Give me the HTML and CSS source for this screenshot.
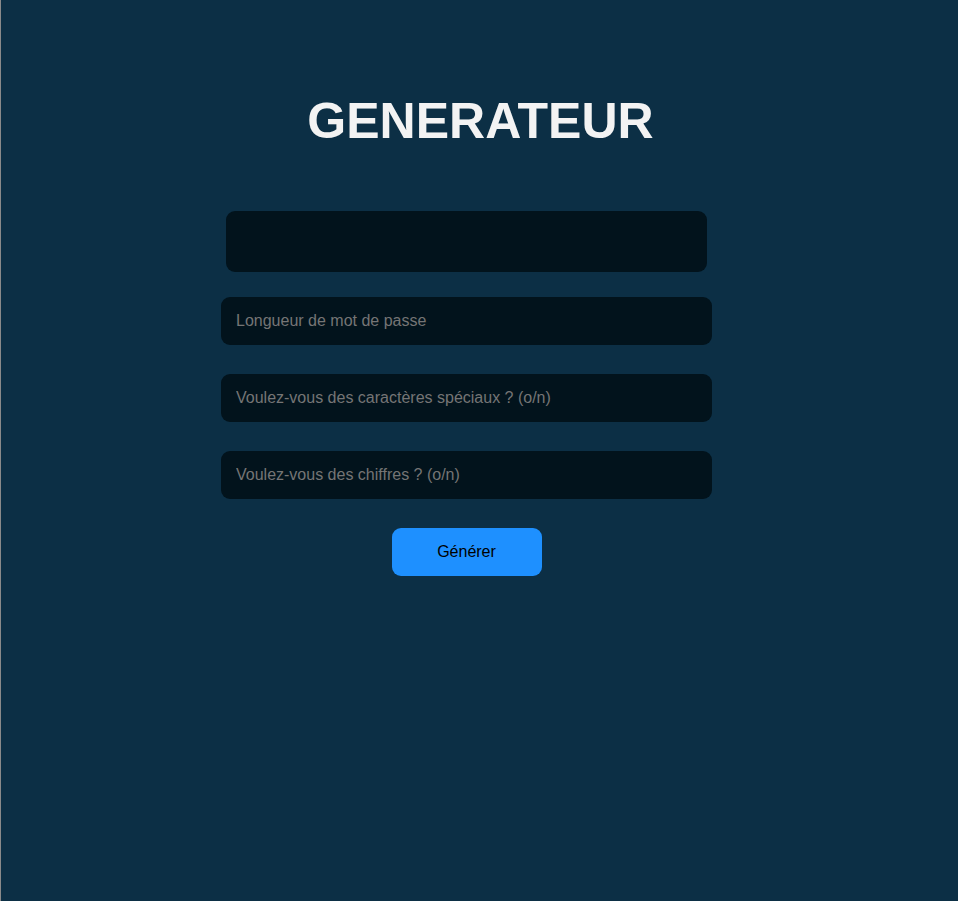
FILE: index.html
```html
<!DOCTYPE html>
<html lang="fr">
<head>
<meta charset="utf-8">
<title>Generateur</title>
<link rel="stylesheet" href="styles.css">
</head>
<body>
<main class="page">
  <h1 class="title">GENERATEUR</h1>
  <form class="form">
    <div class="output"></div>
    <input class="field" type="text" placeholder="Longueur de mot de passe">
    <input class="field" type="text" placeholder="Voulez-vous des caractères spéciaux ? (o/n)">
    <input class="field" type="text" placeholder="Voulez-vous des chiffres ? (o/n)">
    <button class="btn" type="button">Générer</button>
  </form>
</main>
</body>
</html>
```
FILE: styles.css
```css
html, body {
  margin: 0;
  padding: 0;
  height: 100%;
}
body {
  background: #0c2f45;
  border-left: 1px solid #8a8a8a;
  box-sizing: border-box;
  font-family: "Liberation Sans", Arial, sans-serif;
}
.page {
  display: flex;
  flex-direction: column;
  padding-top: 93px;
}
.title {
  margin: 0;
  text-align: center;
  color: #f3f3f3;
  font-size: 50px;
  line-height: 56px;
  font-weight: bold;
  padding-left: 2px;
}
.form {
  margin: 62px 0 0 220px;
  width: 491px;
  display: flex;
  flex-direction: column;
  align-items: center;
}
.output {
  width: 481px;
  height: 61px;
  background: #02131c;
  border-radius: 9px;
  margin-bottom: 25px;
}
.field {
  width: 491px;
  height: 48px;
  box-sizing: border-box;
  border: none;
  outline: none;
  background: #02131c;
  border-radius: 9px;
  padding: 0 15px;
  font-family: "Liberation Sans", Arial, sans-serif;
  font-size: 16px;
  color: #cfcfcf;
  margin-bottom: 29px;
}
.field::placeholder {
  color: #757575;
}
.btn {
  width: 150px;
  height: 48px;
  border: none;
  border-radius: 9px;
  background: #1e90ff;
  color: #000;
  font-family: "Liberation Sans", Arial, sans-serif;
  font-size: 16px;
  cursor: pointer;
}
```
